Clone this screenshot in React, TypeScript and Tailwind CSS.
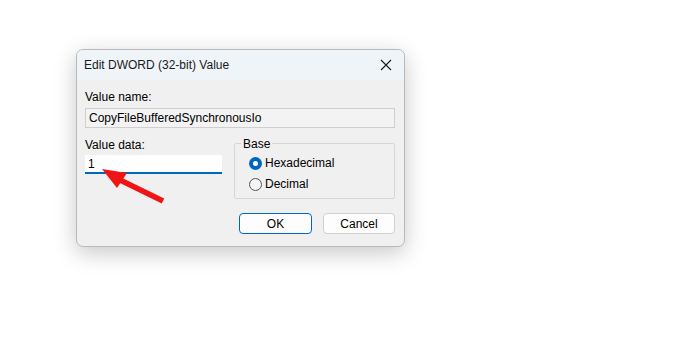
import React from "react";

export default function App() {
  return (
    <div
      className="relative w-[696px] h-[363px] bg-white pt-[49px] pl-[76px]"
      style={{ fontFamily: '"Liberation Sans", Arial, sans-serif' }}
    >
      <div className="w-[329px] h-[198px] rounded-[7px] border border-[#b9b9b9] bg-[#f0f0f0] overflow-hidden shadow-[0_6px_22px_rgba(0,0,0,0.22)] flex flex-col">
        {/* Title bar */}
        <div className="h-[30px] bg-[#eff4f9] flex items-center justify-between pl-[7px] pr-[9px] shrink-0">
          <span className="text-[12px] text-[#1a1a1a] leading-none">Edit DWORD (32-bit) Value</span>
          <svg width="12" height="12" viewBox="0 0 12 12" className="mr-[3px]">
            <path d="M1 1 L11 11 M11 1 L1 11" stroke="#1a1a1a" strokeWidth="1.1" fill="none" />
          </svg>
        </div>
        {/* Body */}
        <div className="flex flex-col pl-[8px] pr-[9px] pt-[10px] text-[12px] text-[#000]">
          <div className="leading-[14px] h-[14px]">Value name:</div>
          <div className="mt-[4px] h-[20px] border border-[#cfcfcf] bg-[#f3f3f3] pl-[3px] flex items-center leading-none">
            CopyFileBufferedSynchronousIo
          </div>
          <div className="mt-[10px] flex items-start gap-[12px]">
            <div className="w-[137px] flex flex-col">
              <div className="leading-[14px] h-[14px]">Value data:</div>
              <div className="mt-[3px] h-[19px] bg-white border-b-2 border-[#0067c0] pl-[3px] flex items-center leading-none">
                1
              </div>
            </div>
            <div className="mt-[5px] flex-1 relative h-[56px] border border-[#d6d6d6] rounded-[2px]">
              <span className="absolute -top-[7px] left-[6px] px-[2px] bg-[#f0f0f0] leading-[14px]">Base</span>
              <div className="flex flex-col pl-[14px] pt-[12px] gap-[7px]">
                <div className="flex items-center gap-[3px] h-[14px]">
                  <div className="w-[13px] h-[13px] rounded-full bg-[#0067c0] flex items-center justify-center">
                    <div className="w-[5px] h-[5px] rounded-full bg-white" />
                  </div>
                  <span className="leading-none">Hexadecimal</span>
                </div>
                <div className="flex items-center gap-[3px] h-[14px]">
                  <div className="w-[13px] h-[13px] rounded-full border border-[#555] bg-[#f5f5f5]" />
                  <span className="leading-none">Decimal</span>
                </div>
              </div>
            </div>
          </div>
          <div className="mt-[14px] flex justify-end gap-[11px]">
            <button className="w-[73px] h-[21px] rounded-[4px] border border-[#0067c0] bg-[#fdfdfd] text-[12px] leading-none">
              OK
            </button>
            <button className="w-[72px] h-[21px] rounded-[4px] border border-[#d0d0d0] bg-[#fdfdfd] text-[12px] leading-none">
              Cancel
            </button>
          </div>
        </div>
      </div>
      {/* Red arrow overlay */}
      <svg className="absolute left-0 top-0" width="696" height="363" viewBox="0 0 696 363">
        <line x1="163" y1="201" x2="118" y2="179" stroke="#f01414" strokeWidth="5.5" strokeLinecap="butt" />
        <polygon points="102,169 127,173 117,188" fill="#f01414" />
      </svg>
    </div>
  );
}
